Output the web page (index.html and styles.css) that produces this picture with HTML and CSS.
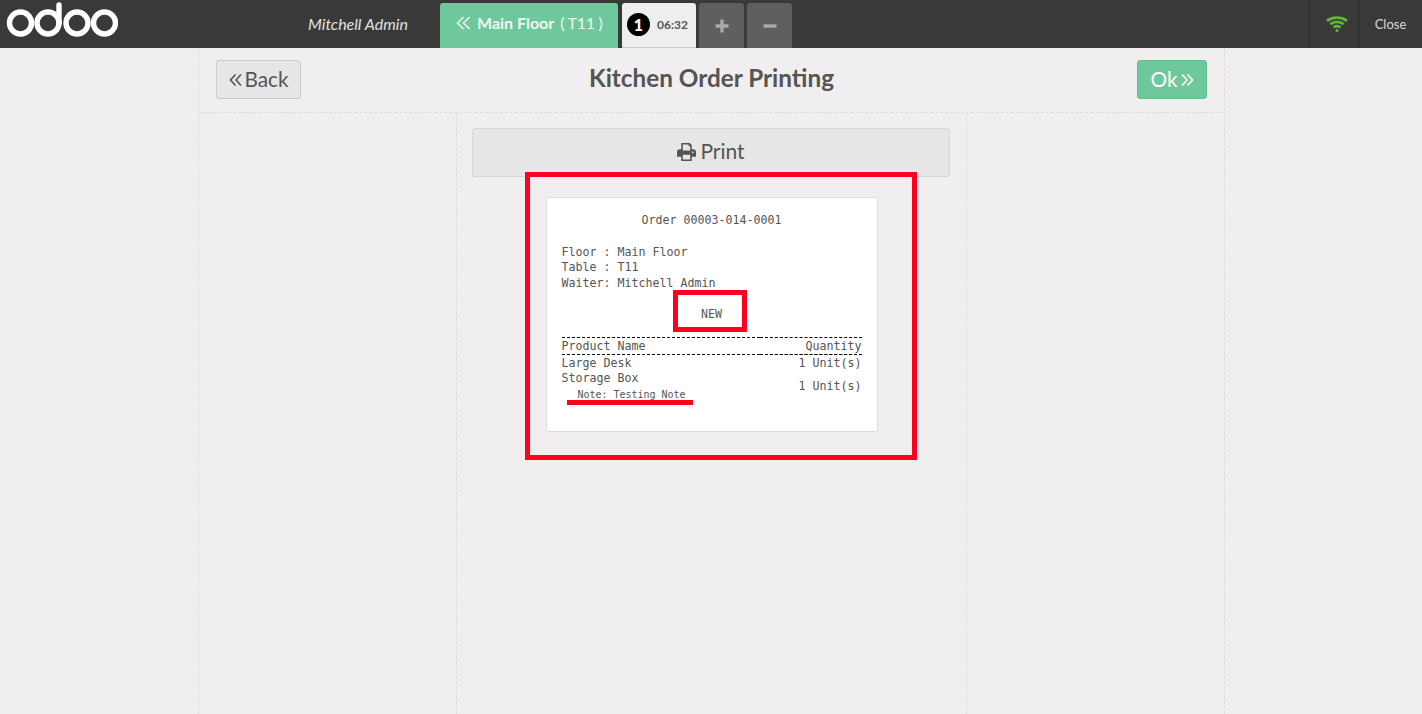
FILE: index.html
```html
<!DOCTYPE html>
<html lang="en">
<head>
    <meta charset="UTF-8">
    <title>Kitchen Order Printing</title>
    <link rel="stylesheet" href="styles.css">
</head>
<body>
    <!-- Top bar -->
    <header class="topbar">
        <svg class="logo" width="118" height="40" viewBox="0 0 118 40">
            <g fill="none" stroke="#fff" stroke-width="5.400">
                <circle cx="20.500" cy="23" r="11"/>
                <circle cx="48" cy="23" r="11"/>
                <circle cx="77" cy="23" r="11"/>
                <circle cx="104.500" cy="23" r="11"/>
                <path d="M59 23V5" stroke-linecap="round"/>
            </g>
        </svg>
        <div class="username">Mitchell Admin</div>
        <div class="floor-tab">
            <svg class="floor-arrows" width="14" height="16" viewBox="0 0 14 16">
                <path d="M7.500 2 1.500 8l6 6M13.500 2l-6 6 6 6" fill="none" stroke="#e3f3ec" stroke-width="1.700"/>
            </svg>
            <span class="floor-name">Main Floor</span>
            <span class="floor-table">( T11 )</span>
        </div>
        <div class="order-tab">
            <span class="order-num">1</span>
            <span class="order-time">06:32</span>
        </div>
        <div class="square-tab">
            <svg width="14" height="14" viewBox="0 0 14 14"><path d="M7 .5v13M.5 7h13" stroke="#a9a9a9" stroke-width="3.400"/></svg>
        </div>
        <div class="square-tab">
            <svg width="14" height="14" viewBox="0 0 14 14"><path d="M.5 7h13" stroke="#a9a9a9" stroke-width="3.400"/></svg>
        </div>
        <div class="status-cell">
            <svg width="22" height="16" viewBox="0 0 22 16">
                <g fill="none" stroke="#5db83a" stroke-width="2.800">
                    <path d="M1 4.800C6.500.6 15.500.6 21 4.800"/>
                    <path d="M4.300 8.200c3.800-3 9.600-3 13.400 0"/>
                    <path d="M7.600 11.300c2-1.400 4.800-1.400 6.800 0"/>
                </g>
                <circle cx="11" cy="14.500" r="1.500" fill="#5db83a"/>
            </svg>
        </div>
        <div class="close-cell">Close</div>
    </header>

    <main class="screen">
        <div class="screen-head">
            <div class="head-left">
                <button class="btn back-btn">
                    <svg width="13" height="14" viewBox="0 0 13 14"><path d="M6.500 1.500 1.500 7l5 5.500M12 1.500 7 7l5 5.500" fill="none" stroke="#555" stroke-width="1.600"/></svg>
                    Back
                </button>
            </div>
            <h1>Kitchen Order Printing</h1>
            <div class="head-right">
                <button class="btn ok-btn">
                    Ok
                    <svg width="13" height="14" viewBox="0 0 13 14"><path d="M1 1.500 6 7l-5 5.500M6.500 1.500l5 5.500-5 5.500" fill="none" stroke="#fff" stroke-width="1.600"/></svg>
                </button>
            </div>
        </div>

        <div class="screen-body">
            <div class="side"></div>
            <div class="center">
                <button class="print-btn">
                    <svg width="19" height="18" viewBox="0 0 18 17">
                        <path fill="#555" fill-rule="evenodd" d="M4 0h8l2 2v4h1.500C17 6 18 7 18 8.500V13h-4v4H4v-4H0V8.500C0 7 1 6 2.500 6H4zM5.500 1.500V7h7V3h-1.500V1.500zM5.500 11v4.500h7V11zM15 8a.8.8 0 1 0 .01 0z"/>
                    </svg>
                    Print
                </button>
                <div class="receipt">
                    <div class="receipt-title">Order 00003-014-0001</div>
                    <div class="receipt-info">
                        <div>Floor : Main Floor</div>
                        <div>Table : T11</div>
                        <div>Waiter: Mitchell Admin</div>
                    </div>
                    <div class="receipt-status">NEW</div>
                    <table class="receipt-table">
                        <thead>
                            <tr><th class="col-name">Product Name</th><th class="col-qty">Quantity</th></tr>
                        </thead>
                        <tbody>
                            <tr class="first-row"><td>Large Desk</td><td class="col-qty">1 Unit(s)</td></tr>
                            <tr>
                                <td>Storage Box<div class="line-note">Note: Testing Note</div></td>
                                <td class="col-qty">1 Unit(s)</td>
                            </tr>
                        </tbody>
                    </table>
                </div>
                <!-- red marks drawn over the screenshot -->
                <div class="mark mark-receipt"></div>
                <div class="mark mark-new"></div>
                <div class="mark-line"></div>
            </div>
            <div class="side"></div>
        </div>
    </main>
</body>
</html>
```

FILE: styles.css
```css
* {
    box-sizing: border-box;
}

html, body {
    height: 100%;
}

body {
    margin: 0;
    display: flex;
    flex-direction: column;
    height: 714px;
    overflow: hidden;
    background: #f0eeee;
    color: #555;
    font-family: Lato, sans-serif;
}

.topbar {
    display: flex;
    align-items: flex-start;
    height: 48px;
    background: #393939;
    flex: none;
}

.logo {
    flex: none;
    margin-right: 190px;
}

.username {
    width: 132px;
    flex: none;
    line-height: 48px;
    font-size: 16px;
    font-style: italic;
    color: #e0e0e0;
}

.floor-tab {
    display: flex;
    align-items: center;
    width: 178px;
    height: 45px;
    margin-top: 3px;
    padding: 0 0 6px 16px;
    border-radius: 3px 3px 0 0;
    background: #6ec89b;
    color: #f0f8f4;
    font-size: 16px;
}

.floor-name {
    margin-left: 7px;
    font-weight: 700;
}

.floor-table {
    margin-left: 6px;
    letter-spacing: -0.3px;
}

.order-tab {
    display: flex;
    align-items: center;
    width: 74px;
    height: 45px;
    margin: 3px 3px 0 4px;
    padding: 0 0 2px 5px;
    border-radius: 3px 3px 0 0;
    background: #eee;
    border-bottom: 1px solid #ccc;
}

.order-num {
    width: 23px;
    height: 23px;
    border-radius: 50%;
    background: #000;
    color: #fff;
    font-size: 16px;
    font-weight: 900;
    line-height: 23px;
    text-align: center;
}

.order-time {
    margin-left: 7px;
    font-size: 12px;
    font-weight: 700;
}

.square-tab {
    display: flex;
    align-items: center;
    justify-content: center;
    width: 45px;
    height: 45px;
    margin: 3px 3px 0 0;
    border-radius: 3px 3px 0 0;
    background: #5f5f5f;
}

.status-cell {
    display: flex;
    align-items: center;
    justify-content: center;
    width: 50px;
    height: 48px;
    margin-left: auto;
    padding-left: 5px;
    border-left: 1px solid #292929;
    border-right: 1px solid #292929;
}

.close-cell {
    width: 63px;
    line-height: 48px;
    font-size: 13px;
    text-align: center;
    color: #d8d8d8;
}

.screen {
    flex: 1;
    display: flex;
    flex-direction: column;
    width: 1027px;
    margin-left: 198px;
    border-left: 1px dashed #dcdcdc;
    border-right: 1px dashed #dcdcdc;
}

.screen-head {
    display: grid;
    grid-template-columns: 1fr auto 1fr;
    align-items: start;
    height: 65px;
    padding: 12px 17px 0;
    border-bottom: 1px dashed #dcdcdc;
    flex: none;
}

.screen-head h1 {
    margin: 0;
    font-size: 24.300px;
    line-height: 36px;
    font-weight: 700;
    color: #555;
}

.head-right {
    display: flex;
    justify-content: flex-end;
}

.btn {
    display: flex;
    align-items: center;
    justify-content: center;
    gap: 3px;
    height: 39px;
    padding: 0 0 2px;
    border: 1px solid #cacaca;
    border-radius: 3px;
    font-family: Lato, sans-serif;
    font-size: 20.800px;
}

.btn svg {
    margin-top: 3px;
}

.back-btn {
    gap: 2px;
    width: 85px;
    padding-left: 1px;
    background: #e6e6e6;
    color: #555;
}

.ok-btn {
    width: 70px;
    background: #6ec89b;
    border-color: #64bd90;
    color: #fff;
}

.screen-body {
    flex: 1;
    display: flex;
    min-height: 0;
}

.side {
    flex: 1;
}

.center {
    position: relative;
    width: 511px;
    flex: none;
    padding-top: 15px;
    border-left: 1px dashed #dcdcdc;
    border-right: 1px dashed #dcdcdc;
}

.print-btn {
    display: flex;
    align-items: center;
    justify-content: center;
    gap: 4px;
    width: 478px;
    height: 49px;
    margin: 0 0 0 15px;
    padding: 0 0 4px;
    border: 1px solid #d6d6d6;
    border-radius: 3px;
    background: #e6e6e6;
    color: #555;
    font-family: Lato, sans-serif;
    font-size: 21px;
}

.print-btn svg {
    margin-top: 3px;
}

.receipt {
    width: 332px;
    height: 235px;
    margin: 20px auto 0;
    padding: 15px 15px 0;
    border-radius: 2px;
    background: #fff;
    border: 1px solid #dedede;
    font-family: "DejaVu Sans Mono", monospace;
    font-size: 11.630px;
    line-height: 15.700px;
    color: #555;
}

.receipt-title {
    text-align: center;
}

.receipt-info {
    margin-top: 16px;
}

.receipt-status {
    margin-top: 15px;
    text-align: center;
}

.receipt-table {
    width: 100%;
    margin-top: 14px;
    border-collapse: collapse;
}

.receipt-table th {
    padding: 1px 0 0;
    line-height: 15px;
    font-weight: 400;
    border-top: 1px dashed #000;
    border-bottom: 1px dashed #000;
}

.receipt-table td {
    padding: 0;
}

.receipt-table .first-row td {
    padding-top: 1px;
}

.col-name {
    text-align: left;
}

.col-qty {
    text-align: right;
    vertical-align: middle;
}

.line-note {
    padding-left: 16px;
    font-size: 9.970px;
}

.mark {
    position: absolute;
    border: 5px solid #ff0021;
}

.mark-receipt {
    left: 68px;
    top: 59px;
    width: 392px;
    height: 288px;
}

.mark-new {
    left: 216px;
    top: 177px;
    width: 74px;
    height: 42px;
}

.mark-line {
    position: absolute;
    left: 110px;
    top: 287px;
    width: 126px;
    height: 5px;
    background: #ff0021;
}
```
